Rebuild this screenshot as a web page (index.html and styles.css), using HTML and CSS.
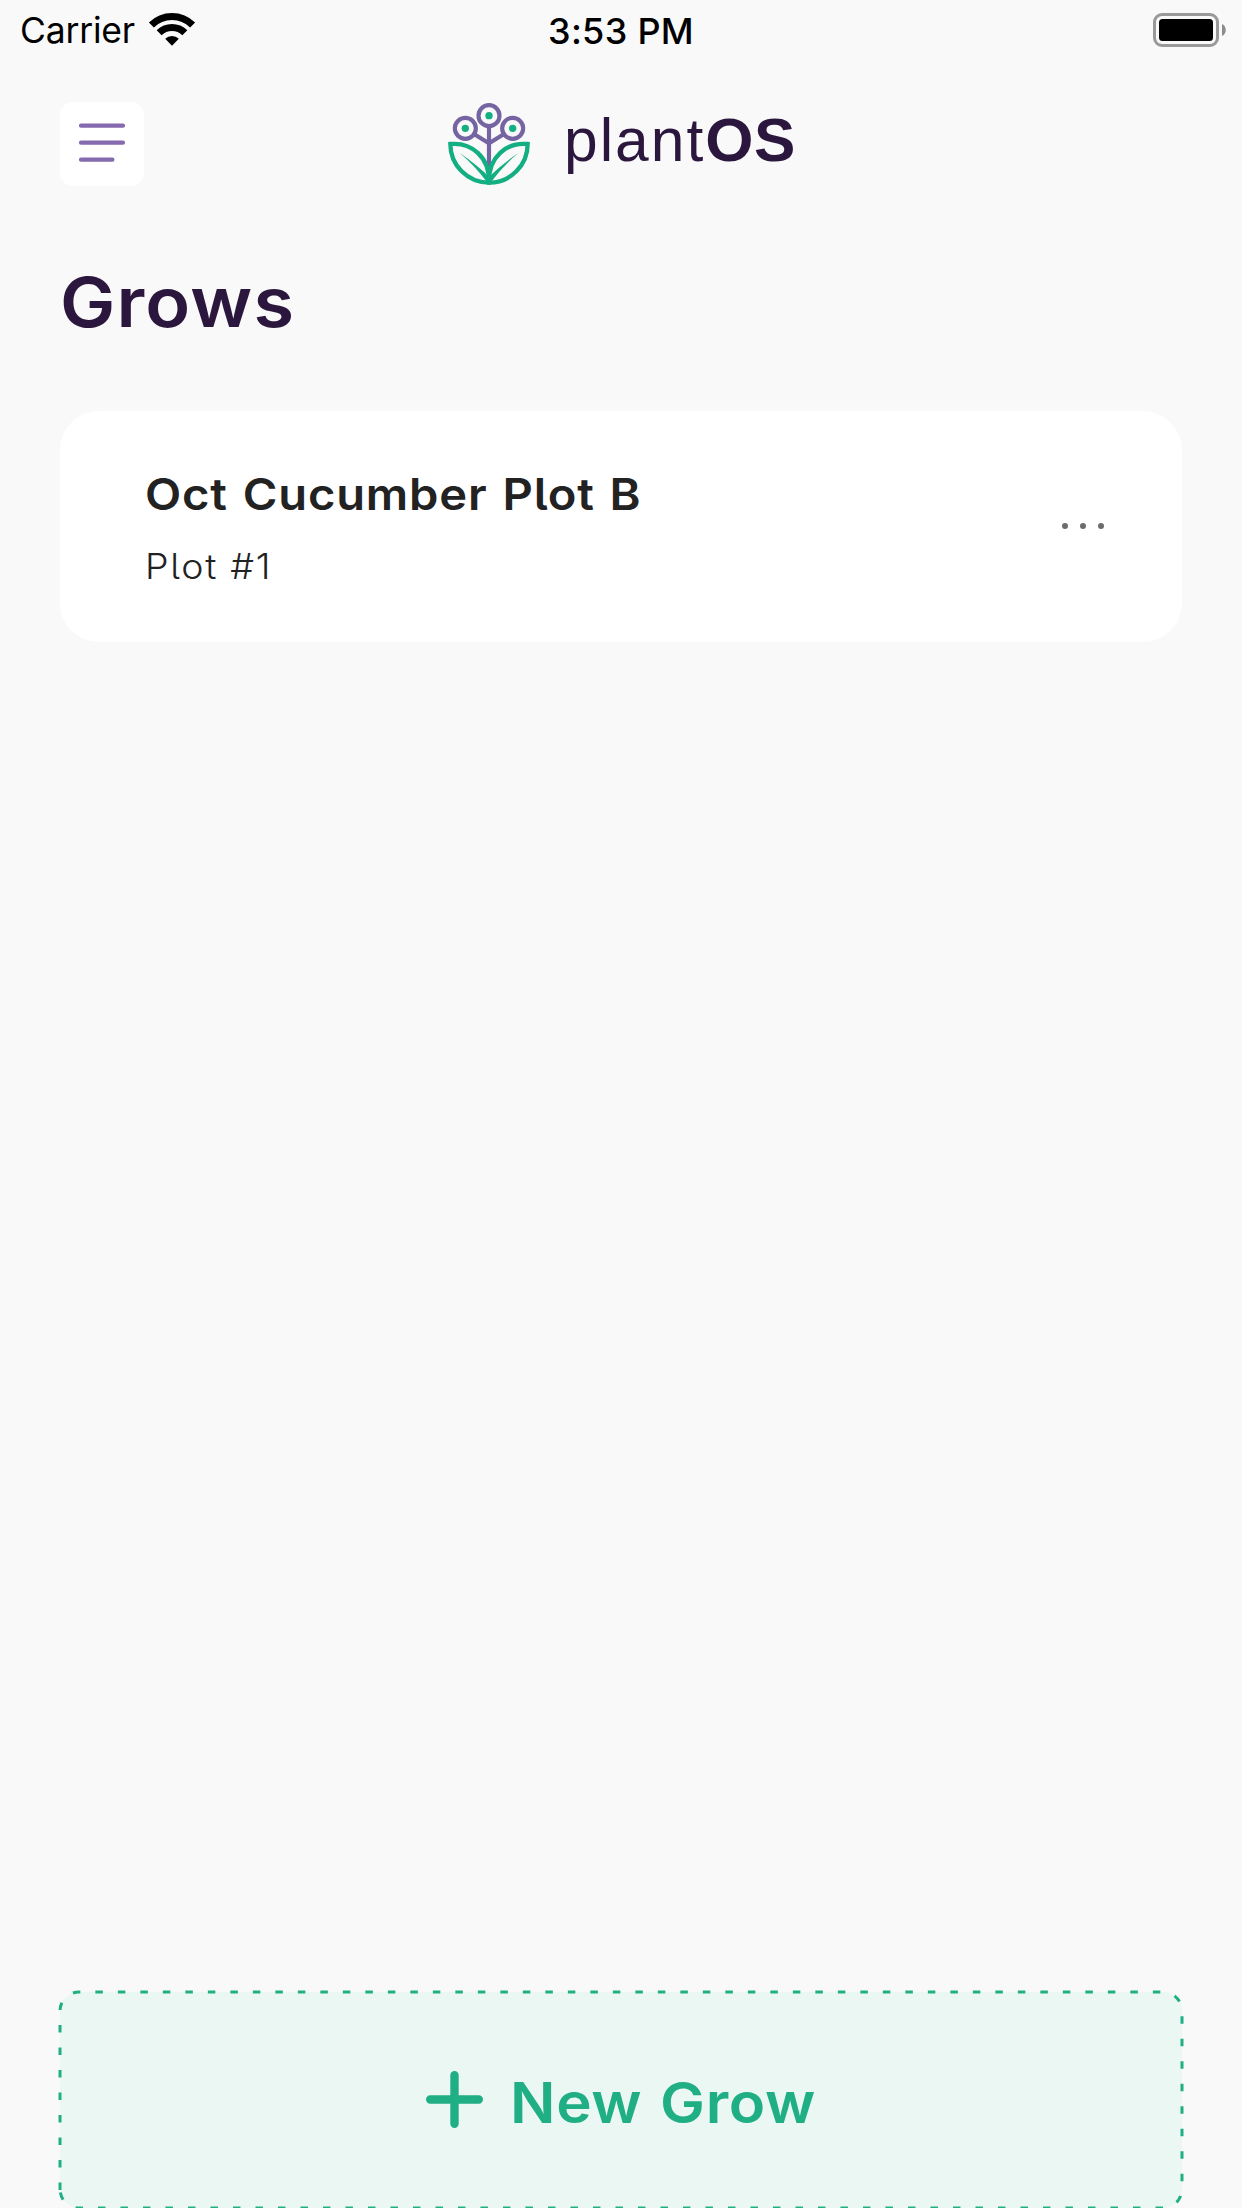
FILE: index.html
```html
<!DOCTYPE html>
<html lang="en">
<head>
<meta charset="utf-8">
<title>plantOS – Grows</title>
<link rel="stylesheet" href="styles.css">
</head>
<body>
<div class="screen">
  <div class="status">
    <div class="status-left">
      <span class="carrier">Carrier</span>
      <svg class="wifi" viewBox="0 0 138 99" fill="none" stroke="#000" stroke-width="21">
        <path d="M7.1 36.1A87.5 87.5 0 0 1 130.9 36.1"/>
        <path d="M30.5 59.5A54.5 54.5 0 0 1 107.5 59.5"/>
        <path d="M69 98L48.5 77.5A29 29 0 0 1 89.5 77.5Z" fill="#000" stroke="none"/>
      </svg>
    </div>
    <span class="time">3:53 PM</span>
    <svg class="battery" viewBox="0 0 74 34">
      <rect x="1.5" y="1.5" width="63" height="31" rx="7.5" fill="none" stroke="#999" stroke-width="3"/>
      <rect x="6" y="6" width="54" height="22" rx="3.5"/>
      <path d="M69 11C74 13 74 21 69 23Z" fill="#8c8c8c"/>
    </svg>
  </div>

  <header class="header">
    <button class="menu" aria-label="Menu">
      <svg viewBox="0 0 84 84" stroke="#856aaf" stroke-width="4.2" stroke-linecap="round">
        <path d="M21 23.7H63M21 40.7H63M21 57.7H52.4"/>
      </svg>
    </button>
    <div class="brand">
      <svg class="logo" viewBox="0 0 252 252" fill="none">
        <g stroke="#7464a2" stroke-width="12.5">
          <circle cx="126" cy="41" r="31.5"/>
          <circle cx="55" cy="79" r="31.5"/>
          <circle cx="197" cy="79" r="31.5"/>
          <path d="M126 72V202M82 97L126 124L170 97"/>
        </g>
        <g fill="#14ae83">
          <circle cx="126" cy="41" r="11"/>
          <circle cx="55" cy="79" r="11"/>
          <circle cx="197" cy="79" r="11"/>
          <path d="M38 153Q92 190 130 228L118 238Q84 192 38 153Z"/>
          <path d="M214 153Q160 190 122 228L134 238Q168 192 214 153Z"/>
        </g>
        <g stroke="#14ae83" stroke-width="13">
          <path d="M10 126C72 120 129 164 126 242A116 116 0 0 1 10 126Z"/>
          <path d="M242 126C180 120 123 164 126 242A116 116 0 0 0 242 126Z"/>
        </g>
      </svg>
      <span class="wordmark">plant<b>OS</b></span>
    </div>
  </header>

  <main class="content">
    <h1 class="title">Grows</h1>
    <article class="card">
      <div class="card-text">
        <h2 class="card-title">Oct Cucumber Plot B</h2>
        <p class="card-sub">Plot #1</p>
      </div>
      <svg class="more" viewBox="0 0 42 6" fill="#6c6c6c">
        <circle cx="3" cy="3" r="3"/><circle cx="21" cy="3" r="3"/><circle cx="39" cy="3" r="3"/>
      </svg>
    </article>
  </main>

  <button class="new-grow">
    <svg class="dashes" viewBox="0 0 1122 216" fill="none" stroke="#20af84" stroke-width="3" stroke-dasharray="7.5 15">
      <path d="M0 198V19A19 19 0 0 1 19 0H1103A19 19 0 0 1 1122 19V197A19 19 0 0 1 1103 216H19A19 19 0 0 1 0 198Z"/>
    </svg>
    <svg class="plus" viewBox="0 0 57 57" stroke="#20af84" stroke-width="8.4" stroke-linecap="round">
      <path d="M28.5 4.2V52.8M4.2 28.5H52.8"/>
    </svg>
    <span class="new-label">New Grow</span>
  </button>
</div>
</body>
</html>
```
FILE: styles.css
```css
* { box-sizing: border-box; margin: 0; padding: 0; }
html, body { height: 100%; overflow: hidden; }
body { background: #f9f9f9; font-family: Inter, "Liberation Sans", sans-serif; }
svg { display: block; flex: none; overflow: visible; }
button { border: 0; font: inherit; }

.screen { height: 2208px; display: flex; flex-direction: column; }

.status {
  flex: none;
  display: grid;
  grid-template-columns: 1fr auto 1fr;
  grid-template-rows: 60px;
  align-items: center;
  height: 60px;
  padding: 0 15px;
  color: #000;
  font-size: 36px;
  line-height: 60px;
}
.status-left { display: flex; }
.carrier { width: 134px; padding: 1px 0 0 5px; font-size: 35.5px; letter-spacing: -0.2px; }
.wifi { width: 46px; height: 33px; margin-top: 13px; }
.time { padding-top: 2px; font-weight: 500; letter-spacing: 0.3px; }
.battery { width: 74px; height: 34px; justify-self: end; }

.header {
  flex: none;
  display: grid;
  grid-template-columns: 84px 1fr 84px;
  grid-template-rows: 84px;
  align-items: center;
  height: 84px;
  margin: 42px 60px 0;
}
.menu { width: 84px; height: 84px; border-radius: 13px; background: #fff; }
.brand { display: flex; align-items: center; padding-left: 303px; gap: 33px; }
.logo { width: 84px; height: 84px; }
.wordmark {
  padding-bottom: 8px;
  color: #2b173e;
  font: 60.5px/76px "Liberation Sans", Arial, sans-serif;
  letter-spacing: 2px;
  white-space: nowrap;
}
.wordmark b { font-size: 62px; letter-spacing: 0.6px; }

.content { flex: 1; padding: 76px 60px 0; }
.title {
  height: 149px;
  color: #2b173e;
  font-size: 69px;
  font-weight: 640;
  line-height: 80px;
  letter-spacing: 1.1px;
  transform: scaleX(1.07);
  transform-origin: 0 0;
}
.card {
  display: flex;
  align-items: center;
  justify-content: space-between;
  height: 231px;
  padding: 0 78px 0 85px;
  border-radius: 39px;
  background: #fff;
  color: #222;
}
.card-text { padding-top: 6px; transform: scaleX(1.07); transform-origin: 0 0; }
.card-title { font-size: 44px; font-weight: 620; line-height: 60px; letter-spacing: 0.8px; word-spacing: 2px; }
.card-sub { margin-top: 12px; font-size: 35px; font-weight: 340; line-height: 60px; letter-spacing: 1.6px; }
.card-title, .card-sub { font-feature-settings: "cv05"; }
.more { width: 42px; height: 6px; margin-bottom: 1px; }

.new-grow {
  position: relative;
  display: flex;
  align-items: center;
  padding-left: 366px;
  gap: 27px;
  height: 216px;
  margin: 0 60px;
  border-radius: 19px;
  background: #ebf7f3;
  color: #20af84;
}
.dashes { position: absolute; inset: 0; width: 1122px; height: 216px; }
.plus { width: 57px; height: 57px; margin-bottom: 1px; }
.new-label {
  padding-top: 5px;
  font-size: 56px;
  font-weight: 640;
  line-height: 70px;
  letter-spacing: 0.6px;
  word-spacing: 2px;
  transform: scaleX(1.07);
  transform-origin: 0 0;
}
```
